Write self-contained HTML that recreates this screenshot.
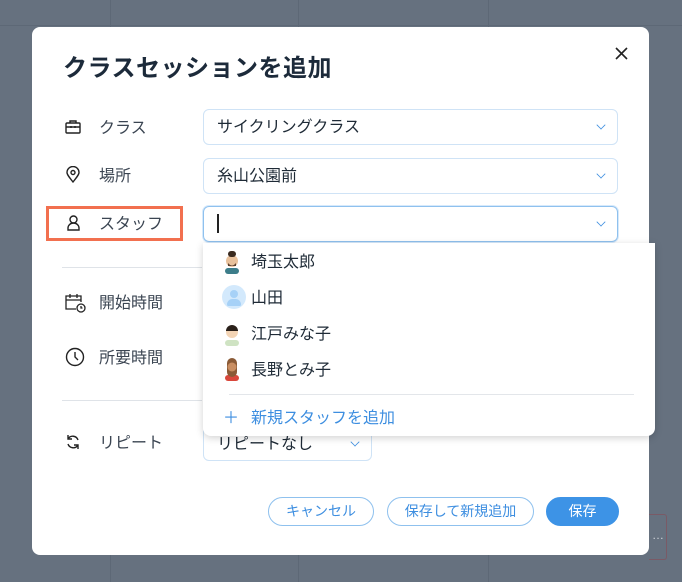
<!DOCTYPE html>
<html><head><meta charset="utf-8"><style>
*{box-sizing:border-box;margin:0;padding:0}
body{width:682px;height:582px;background:#66717f;position:relative;overflow:hidden;font-family:"Liberation Sans","Noto Sans CJK JP",sans-serif;color:#2b3440}
.vl{position:absolute;top:0;bottom:0;width:1px;background:#5d6876}
.hl{position:absolute;left:0;right:0;height:1px;background:#5d6876}
.dlg{position:absolute;left:32px;top:27px;width:617px;height:528px;background:#fff;border-radius:8px}
.abs{position:absolute}
h1{position:absolute;left:31px;top:25px;font-size:24px;line-height:34px;font-weight:bold;color:#1c2a3a;letter-spacing:0.5px}
.lbl{position:absolute;left:67px;font-size:16px;line-height:20px;color:#3b4552;margin-top:2px}
.ic{position:absolute;left:33px}
.sel{position:absolute;left:171px;width:415px;height:36px;border:1px solid #cfe3f6;border-radius:6px;font-size:16px;line-height:20px;padding:8px 13px 6px;color:#1e2a36}
.chev{position:absolute;right:12px;top:11px;width:8px;height:8px;border-right:1.3px solid #3d8ee0;border-bottom:1.3px solid #3d8ee0;transform:rotate(45deg) scale(.8)}
.sep{position:absolute;left:30px;width:140px;height:1px;background:#dfe3e8}
.dd{position:absolute;left:203px;top:243px;width:452px;height:193px;background:#fff;border-radius:0 0 8px 8px;box-shadow:0 2px 8px rgba(0,0,0,.18)}
.it{position:absolute;left:48px;font-size:16px;line-height:20px;color:#1e2a36;margin-top:2px}
.btn{position:absolute;top:497px;height:29px;border:1px solid #8fc1ee;border-radius:15px;font-size:14px;color:#3d8ee0;text-align:center;line-height:27px}
</style></head><body>
<div class="vl" style="left:110px"></div><div class="vl" style="left:298px"></div><div class="vl" style="left:488px"></div>
<div class="hl" style="top:25px"></div>
<div class="dlg">
<h1>クラスセッションを追加</h1>
<svg class="abs" style="left:583px;top:20px" width="13" height="13" viewBox="0 0 13 13" stroke="#222" stroke-width="1.6"><path d="M1 1l11 11M12 1L1 12"/></svg>
<svg class="ic" style="top:93px" width="16" height="14" viewBox="0 0 16 14" fill="none" stroke="#222" stroke-width="1.4"><rect x="1" y="3" width="14" height="10" rx="1"/><path d="M5 3V1h6v2M1 7h14M6 6v2M10 6v2"/></svg>
<div class="lbl" style="top:90px">クラス</div>
<div class="sel" style="top:82px">サイクリングクラス<div class="chev"></div></div>
<svg class="ic" style="top:139px;left:34px" width="14" height="17" viewBox="0 0 14 17" fill="none" stroke="#222" stroke-width="1.4"><path d="M7 16C3 11 1 8.5 1 6.5a6 6 0 0 1 12 0C13 8.5 11 11 7 16z"/><circle cx="7" cy="6.5" r="2"/></svg>
<div class="lbl" style="top:138px">場所</div>
<div class="sel" style="top:131px">糸山公園前<div class="chev"></div></div>
<div class="abs" style="left:14px;top:179px;width:137px;height:35px;border:3.5px solid #f2704f"></div>
<svg class="ic" style="top:188px;left:35px" width="13" height="16" viewBox="0 0 13 16" fill="none" stroke="#222" stroke-width="1.4"><circle cx="6.5" cy="4.5" r="3.5"/><path d="M1 15v-2a5.5 5 0 0 1 11 0v2z"/></svg>
<div class="lbl" style="top:186px">スタッフ</div>
<div class="sel" style="top:179px;border:1.5px solid #8fc1ee;box-shadow:0 0 0 1px #d6e9fb;padding-top:7px"><span style="display:inline-block;width:1.5px;height:19px;background:#222;vertical-align:middle"></span><div class="chev"></div></div>
<div class="sep" style="top:240px"></div>
<svg class="ic" style="top:266px" width="22" height="20" viewBox="0 0 22 20" fill="none" stroke="#222" stroke-width="1.3"><path d="M11 16H1V3h15v6M1 7h15M5 1v4M12 1v4"/><circle cx="16" cy="15" r="4"/><path d="M16 13v2h1.5"/></svg>
<div class="lbl" style="top:265px">開始時間</div>
<svg class="ic" style="top:320px" width="20" height="20" viewBox="0 0 20 20" fill="none" stroke="#222" stroke-width="1.4"><circle cx="10" cy="10" r="8.5"/><path d="M10 5v5l3 3"/></svg>
<div class="lbl" style="top:320px">所要時間</div>
<div class="sep" style="top:373px"></div>
<svg class="ic" style="top:407px" width="16" height="16" viewBox="0 0 16 16" fill="none" stroke="#222" stroke-width="1.4"><path d="M13 6A5.5 5.5 0 0 0 3 5M3 1v4h4M3 10a5.5 5.5 0 0 0 10 1M13 15v-4H9"/></svg>
<div class="lbl" style="top:405px">リピート</div>
<div class="sel" style="top:399px;width:169px;height:35px">リピートなし<div class="chev"></div></div>
</div>
<div class="dd">
<svg class="abs" style="left:18px;top:5px" width="22" height="26" viewBox="0 0 22 26"><rect x="4" y="20" width="14" height="6" rx="3" fill="#3c7d8a"/><circle cx="11" cy="13" r="6" fill="#e8c19c"/><rect x="7" y="3" width="8" height="6" rx="3" fill="#3a2a1f"/><path d="M7 15q4 5 8 0v3H7z" fill="#5a4030"/></svg>
<div class="it" style="top:8px">埼玉太郎</div>
<div class="abs" style="left:19px;top:42px;width:24px;height:24px;border-radius:50%;background:#d3e9fc"><div class="abs" style="left:8px;top:5px;width:8px;height:8px;border-radius:50%;background:#a6d1f7"></div><div class="abs" style="left:5px;top:14px;width:14px;height:7px;border-radius:7px 7px 2px 2px;background:#a6d1f7"></div></div>
<div class="it" style="top:44px">山田</div>
<svg class="abs" style="left:18px;top:77px" width="22" height="26" viewBox="0 0 22 26"><rect x="4" y="20" width="14" height="6" rx="3" fill="#cfe3c3"/><circle cx="11" cy="12" r="6" fill="#f3d4b5"/><path d="M5 11a6 6 0 0 1 12 0z" fill="#2a201a"/></svg>
<div class="it" style="top:80px">江戸みな子</div>
<svg class="abs" style="left:18px;top:112px" width="22" height="26" viewBox="0 0 22 26"><rect x="4" y="20" width="14" height="6" rx="3" fill="#d9473b"/><rect x="6" y="3" width="10" height="19" rx="5" fill="#8a5a36"/><circle cx="11" cy="12" r="4.5" fill="#c98e62"/></svg>
<div class="it" style="top:116px">長野とみ子</div>
<div class="abs" style="left:26px;top:151px;width:405px;height:1px;background:#e3e6ea"></div>
<div class="it" style="top:164px;left:20px;color:#3d8ee0"><span style="margin-right:12px">＋</span>新規スタッフを追加</div>
</div>
<div class="btn" style="left:268px;width:106px">キャンセル</div>
<div class="btn" style="left:387px;width:147px">保存して新規追加</div>
<div class="btn" style="left:546px;width:73px;background:#3d93e6;border-color:#3d93e6;color:#fff">保存</div>
<div class="abs" style="left:649px;top:514px;width:18px;height:46px;border:1px solid #7a5a66;border-left:none;border-radius:0 3px 3px 0"></div>
<div class="abs" style="left:652px;top:528px;color:#cfd4da;font-size:12px">…</div>
</body></html>
